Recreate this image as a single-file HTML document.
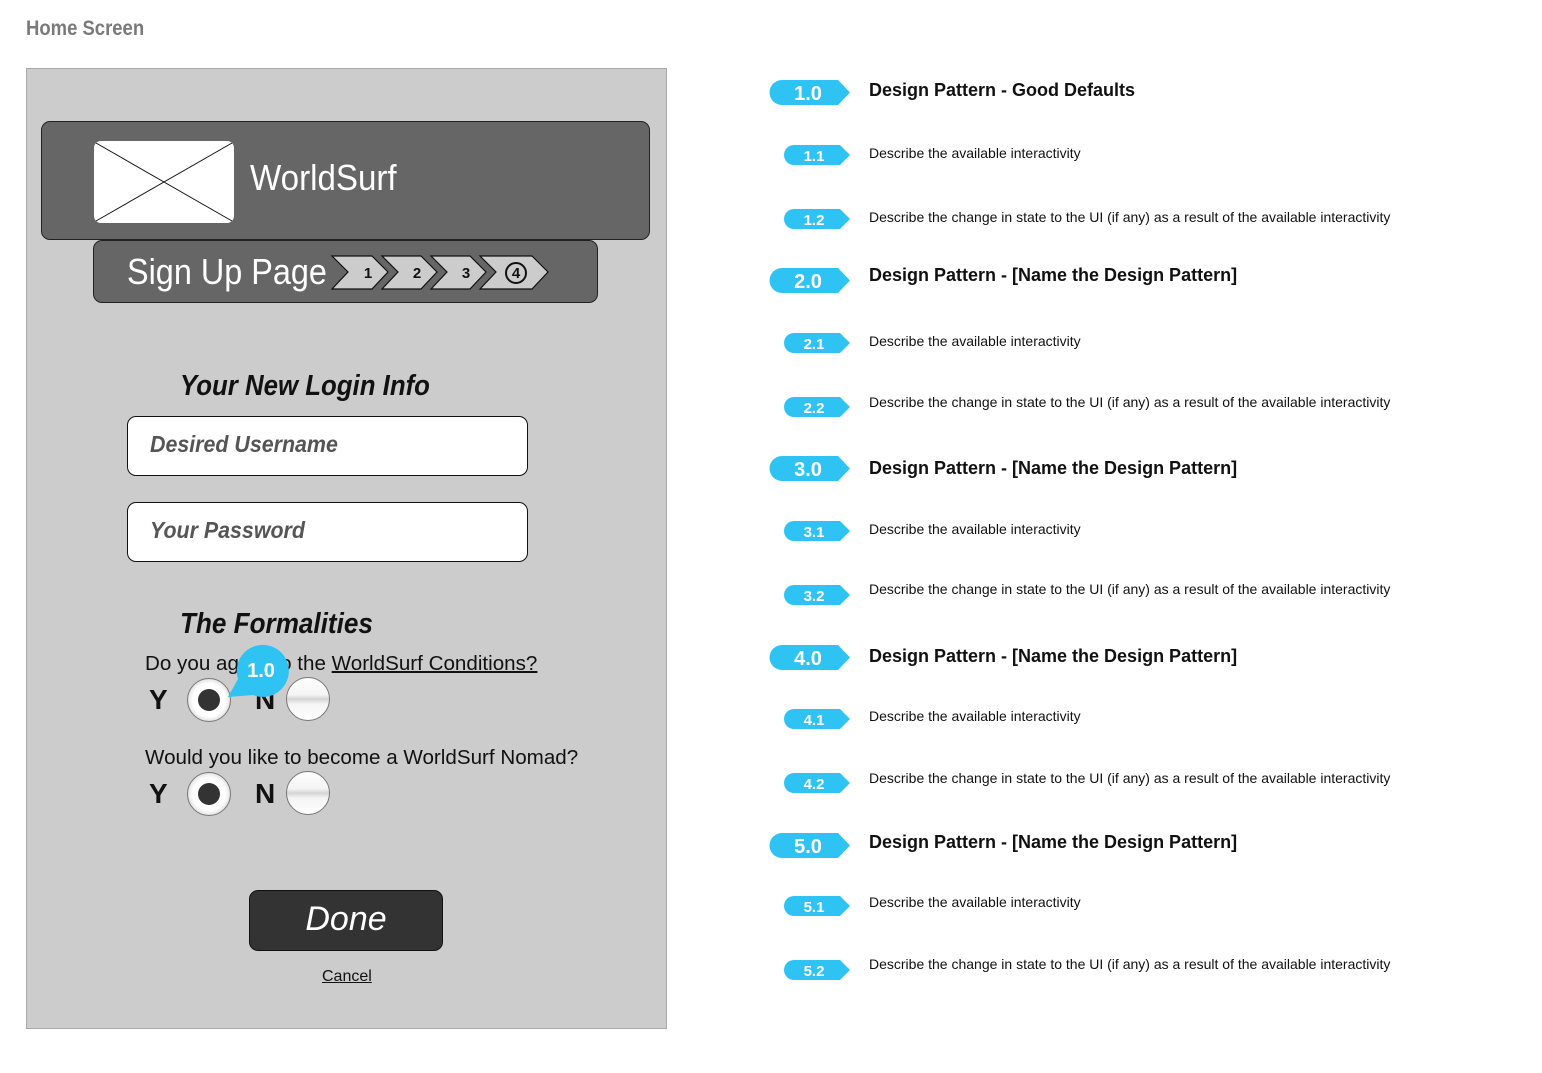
<!DOCTYPE html>
<html><head><meta charset="utf-8"><style>
*{margin:0;padding:0;box-sizing:border-box}
body{width:1542px;height:1073px;background:#fff;position:relative;overflow:hidden;font-family:"Liberation Sans",sans-serif}
.a{position:absolute}
.t{white-space:nowrap}
.ttl{left:26px;top:17px;font-size:21px;font-weight:bold;color:#7a7a7a;transform:scaleX(.88);transform-origin:left}
.panel{left:26px;top:68px;width:641px;height:961px;background:#cccccc;border:1px solid #aaa}
.hdr{left:41px;top:121px;width:609px;height:119px;background:#666;border:1px solid #222;border-radius:9px}
.sub{left:93px;top:240px;width:505px;height:63px;background:#666;border:1px solid #222;border-radius:9px}
.inp{left:127px;width:401px;height:60px;background:#fff;border:1px solid #111;border-radius:9px}
.ph{font-style:italic;font-weight:bold;color:#555;font-size:23px;left:22px;top:14px;transform:scaleX(.93);transform-origin:left}
.q{font-size:20px;color:#111}
.yn{font-size:28px;font-weight:bold;color:#111}
.radio{width:44px;height:44px;border-radius:50%;border:1.5px solid #777;background:radial-gradient(circle at 50% 50%,#fff 0,#fff 55%,#ddd 75%,#fff 100%)}
.radio.on::after{content:"";position:absolute;left:10px;top:10px;width:22px;height:22px;border-radius:50%;background:#333}
.radio.off{background:linear-gradient(#fff 0%,#f4f4f4 40%,#d4d4d4 50%,#f4f4f4 62%,#fff 100%)}
.big{font-size:18px;font-weight:bold;color:#111;left:869px}
.sm{font-size:14px;color:#111;left:869px}
</style></head><body>
<div class="a t ttl">Home Screen</div>
<div class="a panel"></div>
<div class="a hdr"></div>
<svg class="a" style="left:93px;top:140px" width="142" height="84"><rect x="1" y="1" width="140" height="82" rx="7" fill="#fff"/><line x1="3" y1="3" x2="139" y2="81" stroke="#111" stroke-width="1"/><line x1="139" y1="3" x2="3" y2="81" stroke="#111" stroke-width="1"/></svg>
<div class="a t" style="left:250px;top:157px;font-size:36px;color:#fff;transform:scaleX(.92);transform-origin:left">WorldSurf</div>
<div class="a sub"></div>
<div class="a t" style="left:127px;top:251px;font-size:36px;color:#fff;transform:scaleX(.9);transform-origin:left">Sign Up Page</div>
<svg class="a" style="left:330px;top:254px" width="222" height="38">
<g fill="#ccc" stroke="#111" stroke-width="1.2">
<polygon points="2,2 42,2 58,18 42,35 2,35 18,18"/>
<polygon points="52,2 91,2 107,18 91,35 52,35 68,18"/>
<polygon points="101,2 140,2 156,18 140,35 101,35 117,18"/>
<polygon points="150,2 202,2 218,18 202,35 150,35 166,18"/>
</g>
<g font-family="Liberation Sans" font-weight="bold" font-size="15" fill="#111" text-anchor="middle">
<text x="38" y="24">1</text><text x="87" y="24">2</text><text x="136" y="24">3</text><text x="186" y="24">4</text></g>
<circle cx="186" cy="19" r="10" fill="none" stroke="#111" stroke-width="2"/>
</svg>
<div class="a t" style="left:180px;top:370px;font-size:29px;font-style:italic;font-weight:bold;color:#111;transform:scaleX(.89);transform-origin:left">Your New Login Info</div>
<div class="a inp" style="top:416px"><div class="a t ph">Desired Username</div></div>
<div class="a inp" style="top:502px"><div class="a t ph">Your Password</div></div>
<div class="a t" style="left:180px;top:608px;font-size:29px;font-style:italic;font-weight:bold;color:#111;transform:scaleX(.9);transform-origin:left">The Formalities</div>
<div class="a t q" style="left:145px;top:653px;transform:scaleX(1.03);transform-origin:left">Do you agree to the <span style="text-decoration:underline">WorldSurf Conditions?</span></div>
<div class="a t yn" style="left:149px;top:684px">Y</div>
<div class="a radio on" style="left:187px;top:678px"></div>
<div class="a t yn" style="left:255px;top:684px">N</div>
<div class="a radio off" style="left:286px;top:677px"></div>
<svg class="a" style="left:226px;top:643px" width="66" height="56"><path d="M35,2 a26,26 0 1 1 -8,50 L2,54 L12,36 A26,26 0 0 1 35,2z" fill="#2fc3f3"/><text x="35" y="34" font-family="Liberation Sans" font-weight="bold" font-size="20" fill="#fff" text-anchor="middle">1.0</text></svg>
<div class="a t q" style="left:145px;top:747px;transform:scaleX(1.03);transform-origin:left">Would you like to become a WorldSurf Nomad?</div>
<div class="a t yn" style="left:149px;top:778px">Y</div>
<div class="a radio on" style="left:187px;top:772px"></div>
<div class="a t yn" style="left:255px;top:778px">N</div>
<div class="a radio off" style="left:286px;top:771px"></div>
<div class="a" style="left:249px;top:890px;width:194px;height:61px;background:#333;border:1px solid #111;border-radius:9px"></div>
<div class="a t" style="left:249px;top:900px;width:194px;text-align:center;font-size:34px;font-style:italic;color:#fff">Done</div>
<div class="a t" style="left:322px;top:968px;font-size:16px;color:#111;text-decoration:underline">Cancel</div>

<svg class="a" style="left:760px;top:0" width="100" height="1073" font-family="Liberation Sans" font-weight="bold" fill="#fff" text-anchor="middle">
<defs><path id="B" d="M12,0 H68 L80,12.5 L68,25 H12 A12.5,12.5 0 0 1 12,0z" fill="#2fc3f3"/><path id="S" d="M10,0 H56 L66,10 L56,20 H10 A10,10 0 0 1 10,0z" fill="#2fc3f3"/></defs>
<use href="#B" x="10" y="80"/><text x="48" y="100" font-size="20">1.0</text>
<use href="#S" x="24" y="145"/><text x="54" y="161" font-size="15">1.1</text>
<use href="#S" x="24" y="209"/><text x="54" y="225" font-size="15">1.2</text>
<use href="#B" x="10" y="268"/><text x="48" y="288" font-size="20">2.0</text>
<use href="#S" x="24" y="333"/><text x="54" y="349" font-size="15">2.1</text>
<use href="#S" x="24" y="397"/><text x="54" y="413" font-size="15">2.2</text>
<use href="#B" x="10" y="456"/><text x="48" y="476" font-size="20">3.0</text>
<use href="#S" x="24" y="521"/><text x="54" y="537" font-size="15">3.1</text>
<use href="#S" x="24" y="585"/><text x="54" y="601" font-size="15">3.2</text>
<use href="#B" x="10" y="645"/><text x="48" y="665" font-size="20">4.0</text>
<use href="#S" x="24" y="709"/><text x="54" y="725" font-size="15">4.1</text>
<use href="#S" x="24" y="773"/><text x="54" y="789" font-size="15">4.2</text>
<use href="#B" x="10" y="833"/><text x="48" y="853" font-size="20">5.0</text>
<use href="#S" x="24" y="896"/><text x="54" y="912" font-size="15">5.1</text>
<use href="#S" x="24" y="960"/><text x="54" y="976" font-size="15">5.2</text>
</svg>
<div class="a t big" style="top:80px">Design Pattern - Good Defaults</div>
<div class="a t sm" style="top:145px">Describe the available interactivity</div>
<div class="a t sm" style="top:209px">Describe the change in state to the UI (if any) as a result of the available interactivity</div>
<div class="a t big" style="top:265px">Design Pattern - [Name the Design Pattern]</div>
<div class="a t sm" style="top:333px">Describe the available interactivity</div>
<div class="a t sm" style="top:394px">Describe the change in state to the UI (if any) as a result of the available interactivity</div>
<div class="a t big" style="top:458px">Design Pattern - [Name the Design Pattern]</div>
<div class="a t sm" style="top:521px">Describe the available interactivity</div>
<div class="a t sm" style="top:581px">Describe the change in state to the UI (if any) as a result of the available interactivity</div>
<div class="a t big" style="top:646px">Design Pattern - [Name the Design Pattern]</div>
<div class="a t sm" style="top:708px">Describe the available interactivity</div>
<div class="a t sm" style="top:770px">Describe the change in state to the UI (if any) as a result of the available interactivity</div>
<div class="a t big" style="top:832px">Design Pattern - [Name the Design Pattern]</div>
<div class="a t sm" style="top:894px">Describe the available interactivity</div>
<div class="a t sm" style="top:956px">Describe the change in state to the UI (if any) as a result of the available interactivity</div>
</body></html>
